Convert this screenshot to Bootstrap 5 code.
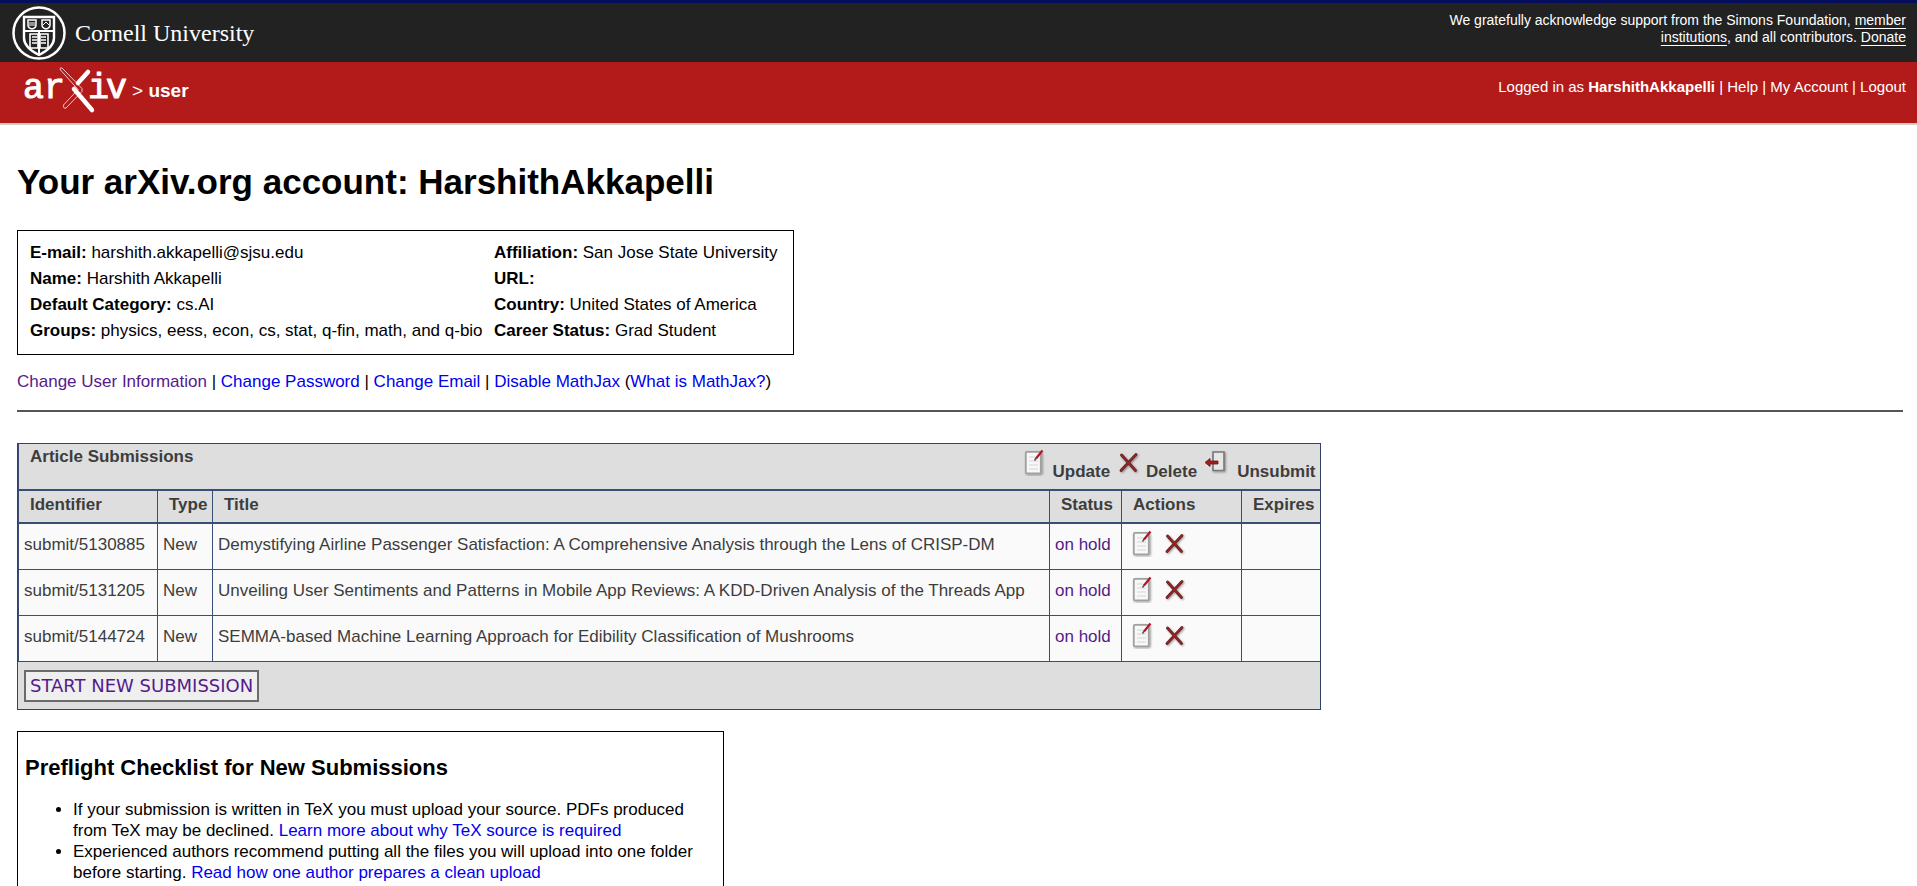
<!DOCTYPE html>
<html lang="en">
<head>
<meta charset="utf-8">
<meta name="viewport" content="width=device-width, initial-scale=1">
<title>arXiv user account</title>
<link href="https://cdn.jsdelivr.net/npm/bootstrap@5.3.0/dist/css/bootstrap.min.css" rel="stylesheet">
<style>
body{font-family:"Liberation Sans",Arial,sans-serif;font-size:17px;line-height:21px;color:#000;background:#fff}
a{color:#00e;text-decoration:none}
a.seen{color:#551a8b}
.topbar{background:#222;border-top:3px solid #040e5c;height:62px;padding:0 11px}
.cu-name{font-family:"Liberation Serif",serif;font-size:24px;line-height:28px;color:#fff}
.thanks{font-size:14px;line-height:17px;color:#fff;width:480px;padding-top:9px}
.thanks a{color:#fff;text-decoration:underline;text-underline-offset:3px}
.redbar{background:#b31b1b;border-bottom:2px solid #ccc;height:63px;padding:0 11px 0 22px;color:#fff}
.redbar a{color:#fff}
.crumb{font-size:19px;padding-top:18px}
.login{font-size:15px;padding-top:14px}
main{padding:37px 14px 0 17px}
h1{font-size:35px;line-height:40px;font-weight:700;margin:0 0 28px}
.info{border:1px solid #000;padding:9px 12px 10px;width:max-content}
.info td{padding:0;line-height:26px;width:287px}
.info td:first-child{width:464px}
hr{margin:18px 0 31px;border-top:2px solid #555;opacity:1}
.subs{border:1px solid #2f4368;background:#dedede;width:max-content;color:#3d3d3d}
.subs table{border-collapse:collapse;table-layout:fixed;width:1301px;margin:0}
.subs th,.subs td{border:1px solid #3a4d76;padding:0 5px;vertical-align:top}
.subs tr>:last-child{border-right:0}
.subs thead tr:first-child th{border-top:0;border-bottom:2px solid #3a4d76;height:46px;padding:2px 4px 0 11px}
.subs thead tr+tr th{border-bottom:2px solid #3a4d76;height:33px;padding:3px 0 0 11px}
.subs tbody td{background:#fafafa;height:46px;padding-top:10px}
.subs tbody td.acts{padding:5px 0 0 10px}
.legend{padding-top:2px}
.lg-label{padding-top:13px}
.startbox{padding:8px 6px 7px}
.startbtn{font-family:"DejaVu Sans",Verdana,sans-serif;font-size:18px;line-height:28px;color:#551a8b;background:#efefef;border:2px solid #6b6b6b;border-radius:0;padding:0 4px;display:block}
.preflight{border:1px solid #000;margin-top:21px;width:707px;padding:23px 7px 0}
.preflight h2{font-size:22px;line-height:25px;font-weight:700;margin:0 0 19px}
.preflight ul{padding-left:48px}
</style>
</head>
<body class="overflow-hidden">
<svg width="0" height="0" class="position-absolute" aria-hidden="true">
 <defs>
  <filter id="sh" x="-20%" y="-20%" width="150%" height="150%"><feDropShadow dx="1" dy="1" stdDeviation="1" flood-color="#000" flood-opacity=".4"/></filter>
  <symbol id="upd" viewBox="0 0 24 28"><g filter="url(#sh)"><rect x="1.800" y="3.800" width="15" height="21.500" rx="1" fill="#f8f8f8" stroke="#a0a0a0" stroke-width="1.800"/></g><path d="M5 9h6M5 13h9M5 17h9M5 21h9" stroke="#d4d4d4" stroke-width="1.200"/><path d="M18.500 2.500L12 10.500" stroke="#b81428" stroke-width="2.200"/><path d="M12.200 10L10.500 12.500" stroke="#555" stroke-width="1.500"/></symbol>
  <symbol id="del" viewBox="0 0 24 28"><g filter="url(#sh)" stroke="#5c2424" stroke-width="2.800" stroke-linecap="round"><path d="M3.500 7L17.500 22.500M18 6.500L3 22.500"/></g><path d="M3.500 7L17.500 22.500M18 6.500L3 22.500" stroke="#982426" stroke-width="1.600" stroke-linecap="round"/></symbol>
  <symbol id="uns" viewBox="0 0 24 28"><g filter="url(#sh)"><path d="M8 4h11v18.500H8z" fill="#e6e6e6" stroke="#777" stroke-width="1.600"/></g><path d="M0 14.500L5 10.500v2.500h8v3H5v2.500z" fill="#a51d1d" stroke="#661616" stroke-width=".8"/></symbol>
 </defs>
</svg>
<header>
 <div class="topbar d-flex justify-content-between">
  <a href="#" class="d-flex align-items-center gap-2">
   <svg width="56" height="56" viewBox="0 0 56 56" fill="none" stroke="#fff" aria-hidden="true"><circle cx="28" cy="28" r="25.500" stroke-width="2.500"/><path d="M13 12h30v21c0 8-7 13-15 17c-8-4-15-9-15-17z" stroke-width="2.400"/><path d="M13 26h30M28 26v23" stroke-width="2"/><path d="M17 15h8v5q0 3-4 4q-4-1-4-4zM31 15h8v5q0 3-4 4q-4-1-4-4z" stroke-width="1.500"/><path d="M18 18h6M18 20h6M32 20l3-3l3 3" stroke-width="1"/><path d="M19 29h8v14h-8zM29 29h8v14h-8z" stroke-width="1.600"/><path d="M21 32h5M21 35h5M21 38h5M30 32h5M30 35h5M30 38h5" stroke-width="1.500"/></svg>
   <span class="cu-name">Cornell University</span>
  </a>
  <div class="thanks text-end">We gratefully acknowledge support from the Simons Foundation, <a href="#">member institutions</a>, and all contributors. <a href="#">Donate</a></div>
 </div>
 <div class="redbar d-flex justify-content-between">
  <div class="d-flex">
   <a href="#" aria-label="arXiv"><svg width="110" height="56" viewBox="0 0 110 56" font-family="Liberation Mono, monospace" font-size="35" fill="#fff" stroke="#fff" stroke-width="1" stroke-linejoin="round"><text x="1" y="36">a</text><text x="22" y="36">r</text><text x="66" y="36">i</text><text x="84" y="36">v</text><path d="M38.500 8Q37 5.500 40 6L60 26.500L60 29.500L44 46Q41 47 41.500 43L56 27.500Z" fill="none" stroke="#f0c8c8" stroke-width="1"/><path d="M66 10L56 21M52 27L70 48" stroke-width="4.500" stroke-linecap="round"/></svg></a>
   <div class="crumb"><span>&gt;</span> <b>user</b></div>
  </div>
  <nav class="login d-block" aria-label="Account">Logged in as <b>HarshithAkkapelli</b> | <a href="#">Help</a> | <a href="#">My Account</a> | <a href="#">Logout</a></nav>
 </div>
</header>
<main>
 <h1>Your arXiv.org account: HarshithAkkapelli</h1>
 <div class="info">
  <table>
   <tr><td><b>E-mail:</b> harshith.akkapelli@sjsu.edu</td><td><b>Affiliation:</b> San Jose State University</td></tr>
   <tr><td><b>Name:</b> Harshith Akkapelli</td><td><b>URL:</b></td></tr>
   <tr><td><b>Default Category:</b> cs.AI</td><td><b>Country:</b> United States of America</td></tr>
   <tr><td><b>Groups:</b> physics, eess, econ, cs, stat, q-fin, math, and q-bio</td><td><b>Career Status:</b> Grad Student</td></tr>
  </table>
 </div>
 <div class="mt-3"><a href="#" class="seen">Change User Information</a> | <a href="#">Change Password</a> | <a href="#">Change Email</a> | <a href="#">Disable MathJax</a> (<a href="#">What is MathJax?</a>)</div>
 <hr>
 <div class="subs">
  <table>
   <colgroup><col style="width:139px"><col style="width:55px"><col style="width:837px"><col style="width:72px"><col style="width:120px"><col style="width:78px"></colgroup>
   <thead>
    <tr><th colspan="6"><div class="d-flex justify-content-between"><span>Article Submissions</span>
     <span class="legend d-flex"><svg width="24" height="28"><use href="#upd"/></svg><span class="lg-label ps-1 me-2">Update</span><svg width="24" height="28"><use href="#del"/></svg><span class="lg-label ps-1 me-2">Delete</span><svg width="24" height="28"><use href="#uns"/></svg><span class="lg-label ps-2">Unsubmit</span></span></div></th></tr>
    <tr><th>Identifier</th><th>Type</th><th>Title</th><th>Status</th><th>Actions</th><th>Expires</th></tr>
   </thead>
   <tbody>
    <tr><td>submit/5130885</td><td>New</td><td>Demystifying Airline Passenger Satisfaction: A Comprehensive Analysis through the Lens of CRISP-DM</td><td><a href="#" class="seen">on hold</a></td><td class="acts"><a href="#" class="me-2" aria-label="Update"><svg width="24" height="28"><use href="#upd"/></svg></a><a href="#" aria-label="Delete"><svg width="24" height="28"><use href="#del"/></svg></a></td><td></td></tr>
    <tr><td>submit/5131205</td><td>New</td><td>Unveiling User Sentiments and Patterns in Mobile App Reviews: A KDD-Driven Analysis of the Threads App</td><td><a href="#" class="seen">on hold</a></td><td class="acts"><a href="#" class="me-2" aria-label="Update"><svg width="24" height="28"><use href="#upd"/></svg></a><a href="#" aria-label="Delete"><svg width="24" height="28"><use href="#del"/></svg></a></td><td></td></tr>
    <tr><td>submit/5144724</td><td>New</td><td>SEMMA-based Machine Learning Approach for Edibility Classification of Mushrooms</td><td><a href="#" class="seen">on hold</a></td><td class="acts"><a href="#" class="me-2" aria-label="Update"><svg width="24" height="28"><use href="#upd"/></svg></a><a href="#" aria-label="Delete"><svg width="24" height="28"><use href="#del"/></svg></a></td><td></td></tr>
   </tbody>
  </table>
  <div class="startbox"><button type="button" class="startbtn">START NEW SUBMISSION</button></div>
 </div>
 <section class="preflight">
  <h2>Preflight Checklist for New Submissions</h2>
  <ul>
   <li>If your submission is written in TeX you must upload your source. PDFs produced from TeX may be declined. <a href="#">Learn more about why TeX source is required</a></li>
   <li>Experienced authors recommend putting all the files you will upload into one folder before starting. <a href="#">Read how one author prepares a clean upload</a></li>
   <li>Common reasons for delays are not included style files, or figures</li>
  </ul>
 </section>
</main>
<script src="https://cdn.jsdelivr.net/npm/bootstrap@5.3.0/dist/js/bootstrap.bundle.min.js"></script>
</body>
</html>
